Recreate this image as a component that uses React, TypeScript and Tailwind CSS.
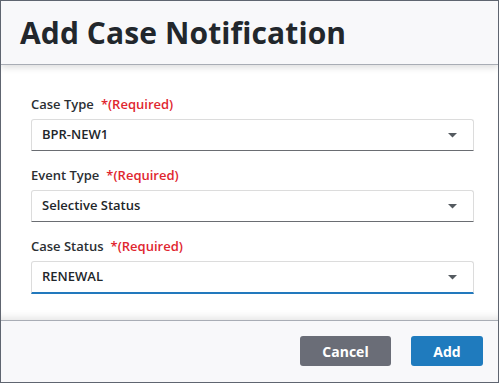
import React from "react";

function Caret() {
  return (
    <svg width="9" height="5" viewBox="0 0 9 5" className="shrink-0">
      <path d="M0 0 H9 L4.5 4.5 Z" fill="#555a60" />
    </svg>
  );
}

function Field({ label, value, active }: { label: string; value: string; active?: boolean }) {
  return (
    <div className="flex flex-col">
      <div className="flex items-center h-[18px] text-[13px] font-semibold text-[#2b2f33] leading-[18px]">
        <span>{label}</span>
        <span className="ml-[7px] text-[#e0262f]">*(Required)</span>
      </div>
      <div
        className={
          active
            ? "mt-[6px] h-[33px] flex items-center justify-between pl-[10px] pr-[16px] bg-white border border-[#dcdcdc] border-b-2 border-b-[#2279bd] rounded-t-[3px]"
            : "mt-[6px] h-[32px] flex items-center justify-between pl-[10px] pr-[16px] bg-white border border-[#dcdcdc] border-b-[#6a6d72] rounded-t-[3px]"
        }
      >
        <span className="text-[13px] font-semibold text-[#22262a]">{value}</span>
        <Caret />
      </div>
    </div>
  );
}

export default function App() {
  return (
    <div className="w-[499px] h-[383px] flex flex-col border border-[#5f6570] bg-white font-['Open_Sans',sans-serif] overflow-hidden">
      <div className="relative z-10 h-[64px] shrink-0 flex items-center px-[19px] bg-[#f8f8fa] border-b border-[#a9adb5] shadow-[0_3px_6px_rgba(0,0,0,0.12)]">
        <h1 className="text-[30px] font-bold text-[#22272c] leading-none tracking-[0.1px]">Add Case Notification</h1>
      </div>
      <div className="flex-1 flex flex-col gap-[15px] pl-[30px] pr-[24px] pt-[30px] shadow-[inset_0_-8px_8px_-6px_rgba(0,0,0,0.12)]">
        <Field label="Case Type" value="BPR-NEW1" />
        <Field label="Event Type" value="Selective Status" />
        <Field label="Case Status" value="RENEWAL" active />
      </div>
      <div className="h-[62px] shrink-0 flex items-center justify-end gap-[20px] pr-[15px] pb-[1px] bg-[#f8f8fa] border-t border-[#a9adb5]">
        <button className="w-[91px] h-[30px] rounded-[3px] bg-[#6a6d77] text-white text-[14px] font-bold">Cancel</button>
        <button className="w-[72px] h-[30px] rounded-[3px] bg-[#1f7bbe] text-white text-[14px] font-bold">Add</button>
      </div>
    </div>
  );
}
